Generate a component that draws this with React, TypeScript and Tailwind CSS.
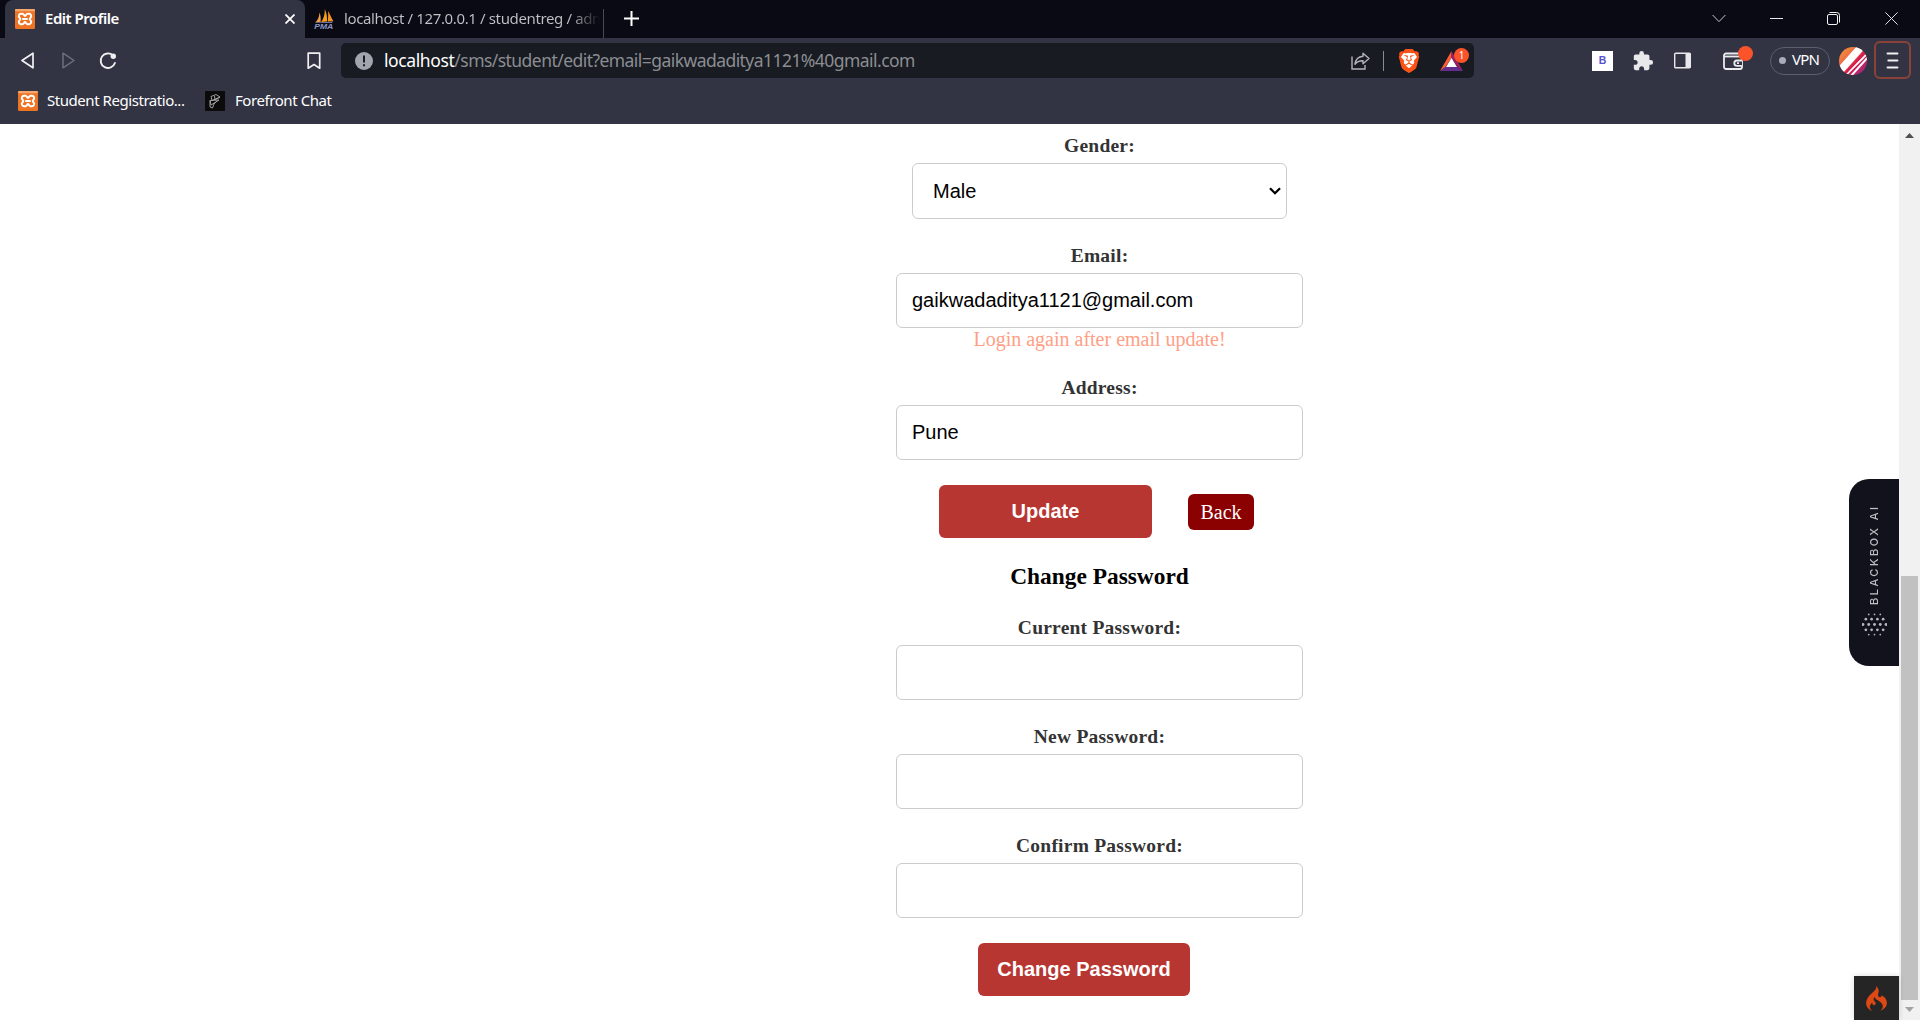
import React from "react";
import { SiBrave, SiCodeigniter } from "react-icons/si";
import { MdExtension } from "react-icons/md";

function XamppIcon() {
  return (
    <svg width="20" height="20" viewBox="0 0 20 20" className="shrink-0">
      <rect width="20" height="20" rx="1.5" fill="#ee7425" />
      <rect width="20" height="2.2" rx="1" fill="#f6a76e" />
      <path
        d="M7.400 4.800H6A2.200 2.200 0 0 0 4.600 8.700L5.300 10l-.7 1.300A2.200 2.200 0 0 0 6 15.200h1.400C9 15.200 9 13 10 13s1 2.200 2.600 2.200H14a2.200 2.200 0 0 0 1.400-3.900L14.700 10l.7-1.300A2.200 2.200 0 0 0 14 4.800h-1.400C11 4.800 11 7 10 7S9 4.800 7.400 4.800ZM8 10h4"
        fill="none"
        stroke="#fff"
        strokeWidth="2"
        strokeLinejoin="round"
        strokeLinecap="round"
      />
    </svg>
  );
}

function PmaIcon() {
  return (
    <svg width="20" height="20" viewBox="0 0 20 20" className="shrink-0 overflow-visible">
      <path d="M5.500 3.500C5.200 8 4 11 1.200 13.500L6.600 13C7 9 6.500 6 5.500 3.500Z" fill="#f0a04a" />
      <path d="M10.800 0C11 5 9.800 9.500 7.200 13l5.800-.4C13.400 8 12.500 4 10.800 0Z" fill="#f89c1c" />
      <path d="M14 2c2 3 3 6.500 5.400 10.300l-5.700.3C14.200 9 14.400 5.500 14 2Z" fill="#f6961d" />
      <path d="M1 13.500 19 12.800l-1 1.200H2Z" fill="#6b78ac" />
      <text x="0.300" y="19.500" fontSize="7.500" fontWeight="700" fontStyle="italic" fontFamily="Liberation Sans, sans-serif" textLength="19" lengthAdjust="spacingAndGlyphs" fill="#8c97c4">
        PMA
      </text>
    </svg>
  );
}

function TabStrip() {
  return (
    <div className="flex h-[38px] bg-[#0a0a14] pl-[5px]">
      <div className="flex h-[38px] w-[300px] shrink-0 items-center rounded-t-[8px] bg-[#323443] pl-[10px] pr-[10px]">
        <XamppIcon />
        <span className="ml-[10px] flex-1 pb-[2px] text-[15px] font-semibold tracking-[-0.480px] text-white">Edit Profile</span>
        <svg width="10" height="10" viewBox="0 0 10 10" stroke="#fff" strokeWidth="1.800">
          <path d="m.5.5 9 9m0-9-9 9" />
        </svg>
      </div>
      <div className="flex h-[38px] w-[299px] shrink-0 items-center pl-[9px]">
        <PmaIcon />
        <span className="mb-[2px] ml-[10px] w-[256px] overflow-hidden whitespace-nowrap bg-linear-to-r from-[#c2c2c6] from-88% to-transparent bg-clip-text text-[15px] tracking-[-0.370px] text-transparent">
          localhost / 127.0.0.1 / studentreg / adm
        </span>
        <span className="ml-auto mt-[9px] h-[29px] w-px self-start bg-[#4a4a52]" />
      </div>
      <svg width="15" height="15" viewBox="0 0 15 15" className="ml-[20px] mt-[11px]" stroke="#fff" strokeWidth="2">
        <path d="M7.500 0v15M0 7.500h15" />
      </svg>
      <div className="ml-auto flex h-[38px] items-center pb-px pr-[22px]">
        <svg width="14" height="9" viewBox="0 0 14 9" fill="none" stroke="#c8c8cc" className="mr-[44px]">
          <path d="m.6 1 6.400 6.600L13.400 1" />
        </svg>
        <span className="mr-[44px] h-px w-[13px] bg-[#e8e8e8]" />
        <svg width="13" height="13" viewBox="0 0 13 13" fill="none" stroke="#f2f2f2" className="mr-[45px]">
          <rect x=".5" y="2.500" width="10" height="10" rx="1.500" />
          <path d="M2.500.5h7.200a2.800 2.800 0 0 1 2.800 2.800v7.200" />
        </svg>
        <svg width="13" height="13" viewBox="0 0 13 13" stroke="#e2e2e4">
          <path d="m.4.4 12.200 12.200m0-12.200L.4 12.600" />
        </svg>
      </div>
    </div>
  );
}

function Toolbar() {
  return (
    <div className="flex h-[45px] items-center pr-[9px]">
      <svg width="13" height="17" viewBox="0 0 13 17" className="ml-[21px]" fill="none" stroke="#f0f0f2" strokeWidth="1.700" strokeLinejoin="round">
        <path d="M12 1.200v14.600L1 8.500Z" />
      </svg>
      <svg width="13" height="17" viewBox="0 0 13 17" className="ml-[28px]" fill="none" stroke="#6d6f7b" strokeWidth="1.500" strokeLinejoin="round">
        <path d="M1 1.200v14.600l11-7.300Z" />
      </svg>
      <svg width="18" height="18" viewBox="0 0 18 18" className="ml-[24px]" fill="none">
        <path d="M14 3.400A7.300 7.300 0 1 0 15.900 11" stroke="#f0f0f2" strokeWidth="1.900" strokeLinecap="round" />
        <circle cx="14.300" cy="4.300" r="2.700" fill="#f0f0f2" />
      </svg>
      <svg width="14" height="18" viewBox="0 0 14 18" className="ml-[190px]" fill="none" stroke="#f0f0f2" strokeWidth="1.700" strokeLinejoin="round">
        <path d="M1.200 1.200h11.500v15L7 12.500l-5.800 3.700Z" />
      </svg>
      <div className="ml-[20px] flex h-[35px] w-[1133px] items-center rounded-[5px] bg-[#181b21]">
        <svg width="18" height="18" viewBox="0 0 18 18" className="ml-[14px]">
          <circle cx="9" cy="9" r="9" fill="#a2a5ae" />
          <path d="M8 3.500h2v7H8zM8 12.200h2v2H8z" fill="#181b21" />
        </svg>
        <div className="ml-[11px] whitespace-nowrap text-[17.500px] tracking-[-0.550px] text-[#8b8d92]">
          <span className="tracking-[-0.400px] text-white">localhost</span>/sms/student/edit?email=gaikwadaditya1121%40gmail.com
        </div>
        <svg width="19" height="18" viewBox="0 0 19 18" className="ml-auto" fill="none" stroke="#b4b5ba" strokeWidth="1.400">
          <path d="M1 4.500V17h13v-4" />
          <path d="M12 1.200 18 6.500l-6 5.300V8.700c-3.500-.2-5.800.7-8 3.500.6-4.700 3.400-7.500 8-7.900Z" strokeLinejoin="round" />
        </svg>
        <span className="ml-[13px] h-[20px] w-px bg-[#8a8c92]" />
        <div className="relative ml-[13px] flex h-[24px] w-[24px] items-center justify-center">
          <svg width="24" height="24" viewBox="0 0 24 24">
            <path d="M6 3.500h12l2.500 4-2 8.500-6.500 5-6.500-5-2-8.500Z" fill="#fff" />
          </svg>
          <SiBrave size={24} color="#fb5215" className="absolute inset-0" />
        </div>
        <div className="relative ml-[19px] mr-[5px] h-[26px] w-[29px]">
          <svg width="23" height="21" viewBox="0 0 23 21" className="mt-[3px]">
            <path d="M11.500 0 0 20l5.500-4 6-9Z" fill="#ff5b3a" />
            <path d="m11.500 0 11.500 20-5.500-4-6-9Z" fill="#9e1f63" />
            <path d="M0 20h23l-5.500-4h-12Z" fill="#662d91" />
            <path d="m11.500 7 5.500 9H6Z" fill="#fff" />
          </svg>
          <span className="absolute right-0 top-0 flex h-[15px] w-[15px] items-center justify-center rounded-full bg-[#fb542b] text-[10px] leading-none text-white">1</span>
        </div>
      </div>

      <span className="ml-auto flex h-[20px] w-[21px] items-center justify-center bg-white font-['Liberation_Sans',sans-serif] text-[10.500px] font-semibold leading-none text-[#5550cc]">B</span>
      <MdExtension size={22} color="#e9e9eb" className="ml-[19px]" />
      <svg width="17" height="17" viewBox="0 0 17 17" className="ml-[20px]">
        <rect x=".7" y="1.200" width="15.600" height="14.600" rx="1" fill="none" stroke="#e9e9eb" strokeWidth="1.400" />
        <path d="M11.500 1h5v15h-5z" fill="#e9e9eb" />
      </svg>
      <div className="relative ml-[32px] h-[18px] w-[20px]">
        <svg width="20" height="18" viewBox="0 0 20 18" fill="none" stroke="#ececef" strokeWidth="1.800">
          <rect x="1" y="1.500" width="18" height="15.500" rx="2" />
          <path d="M1 4.500h17" />
          <path d="M19 8.500h-5a2.700 2.700 0 0 0 0 5.400h5M14 11.200h2" fill="#323443" />
        </svg>
        <span className="absolute left-[15px] top-[-6px] h-[15px] w-[15px] rounded-full bg-[#fb542b]" />
      </div>
      <div className="ml-[27px] flex h-[28px] w-[60px] items-center rounded-full border border-[#5b5e70] pl-[8px]">
        <span className="h-[7px] w-[7px] rounded-full bg-[#a9abbd]" />
        <span className="ml-[6px] pb-[2px] text-[15px] leading-none tracking-[-0.800px] text-white">VPN</span>
      </div>
      <svg width="28" height="28" viewBox="0 0 28 28" className="ml-[9px]">
        <defs>
          <linearGradient id="avatar" x1="0" y1="0" x2="1" y2="1">
            <stop offset="0" stopColor="#f7a035" />
            <stop offset=".35" stopColor="#ed6a45" />
            <stop offset=".6" stopColor="#d71f4b" />
            <stop offset="1" stopColor="#8a2b94" />
          </linearGradient>
          <clipPath id="avatarClip">
            <circle cx="14" cy="14" r="14" />
          </clipPath>
        </defs>
        <g clipPath="url(#avatarClip)">
          <path d="M0 0h28v28H0z" fill="url(#avatar)" />
          <g stroke="#fff">
            <path d="M-1 26 24-2" strokeWidth="7.500" />
            <path d="M7 28 28 7" strokeWidth="1.800" />
            <path d="M11 30 30 9" strokeWidth="2" />
          </g>
          <path d="M3 30 28 3" stroke="#d71f4b" strokeWidth="2" />
        </g>
      </svg>
      <div className="ml-[7px] mt-[-1px] flex h-[38px] w-[37px] items-center justify-center rounded-[6px] border-2 border-[#8a4239]">
        <svg width="13" height="17" viewBox="0 0 13 17" stroke="#f0f0f2" strokeWidth="1.900" strokeLinecap="round">
          <path d="M1.500 1.500h10M2.300 8.500h9.200M1.500 15.500h10" />
        </svg>
      </div>
    </div>
  );
}

function BookmarkBar() {
  return (
    <div className="flex h-[36px] items-center pl-[18px] text-[15px] text-white">
      <XamppIcon />
      <span className="ml-[9px] w-[158px] whitespace-nowrap pb-[2px] tracking-[-0.450px]">Student Registratio...</span>
      <svg width="20" height="20" viewBox="0 0 20 20" fill="none" stroke="#aaa" strokeWidth=".9">
        <rect width="20" height="20" fill="#0b0b0c" stroke="none" />
        <path d="M6 5.500 11 3.500l4 2.500-8 3.500-1-4ZM9.500 5l.5 4 5-3M5 9.500l9-.5-8 5-1-4.500ZM5 9.500v6.500l2.500 1L9 13l3-3" />
      </svg>
      <span className="ml-[10px] whitespace-nowrap pb-[2px] tracking-[-0.430px]">Forefront Chat</span>
    </div>
  );
}

const labelText = "block h-[23px] text-center text-[19.500px] font-bold leading-[23px] tracking-[0.230px] text-[#333]";

function Field({ label, value = "" }: { label: string; value?: string }) {
  return (
    <label className="block w-full">
      <span className={labelText}>{label}</span>
      <input
        readOnly
        value={value}
        className="mt-[6px] block h-[55px] w-full rounded-[6px] border border-[#ccc] bg-white px-[15px] font-['Liberation_Sans',sans-serif] text-[20px] text-black"
      />
    </label>
  );
}

function ProfileForm() {
  return (
    <section className="ml-[896px] flex w-[407px] flex-col items-center pt-[10px] font-['Liberation_Serif',serif]">
      <span className={labelText}>Gender:</span>
      <div className="mt-[6px] flex h-[56px] w-[375px] items-center justify-between rounded-[6px] border border-[#ccc] pl-[20px] pr-[5px] font-['Liberation_Sans',sans-serif] text-[20px] text-black">
        Male
        <svg width="12" height="8" viewBox="0 0 12 8" fill="none" stroke="#000" strokeWidth="2.300">
          <path d="m1 1.200 5 5 5-5" />
        </svg>
      </div>
      <div className="mt-[25px] w-full">
        <Field label="Email:" value="gaikwadaditya1121@gmail.com" />
      </div>
      <span className="h-[23px] text-[20px] leading-[23px] text-[#ffa085]">Login again after email update!</span>
      <div className="mt-[25px] w-full">
        <Field label="Address:" value="Pune" />
      </div>
      <div className="mt-[25px] flex w-full items-center pl-[43px]">
        <button className="h-[53px] w-[213px] rounded-[6px] bg-[#b83632] pb-[2px] font-['Liberation_Sans',sans-serif] text-[20px] font-bold text-white">Update</button>
        <button className="ml-[36px] mt-px h-[36px] w-[66px] rounded-[6px] bg-[#8b0000] text-[20px] leading-[35px] text-white">Back</button>
      </div>
      <h3 className="mt-[25px] h-[27px] text-[23.400px] font-bold leading-[27px] text-black">Change Password</h3>
      <div className="mt-[26px] w-full">
        <Field label="Current Password:" />
      </div>
      <div className="mt-[25px] w-full">
        <Field label="New Password:" />
      </div>
      <div className="mt-[25px] w-full">
        <Field label="Confirm Password:" />
      </div>
      <button className="mr-[31px] mt-[25px] h-[53px] w-[212px] rounded-[6px] bg-[#b83632] pb-[2px] font-['Liberation_Sans',sans-serif] text-[20px] font-bold text-white">
        Change Password
      </button>
    </section>
  );
}

const dotRows = [
  { y: 3, xs: [7, 13, 19], r: 0.9 },
  { y: 8, xs: [4, 10, 16, 22], r: 1.4 },
  { y: 13.5, xs: [1, 7, 13, 19, 25], r: 1.5 },
  { y: 19, xs: [4, 10, 16, 22], r: 1.4 },
  { y: 24, xs: [7, 13, 19], r: 0.9 },
];

function BlackboxTab() {
  return (
    <div className="absolute right-[21px] top-[479px] flex h-[187px] w-[50px] flex-col items-center rounded-l-[20px] bg-[#11121b] pt-[28px]">
      <span className="h-[98px] rotate-180 whitespace-nowrap text-[11px] font-medium leading-[14px] tracking-[2.500px] text-[#c0c0c4] [writing-mode:vertical-rl] font-['Inter',sans-serif]">
        BLACKBOX AI
      </span>
      <svg width="25" height="27" viewBox="0 0 26 27" className="mt-[6px]" fill="#b8b8bc">
        {dotRows.map((row) => row.xs.map((x) => <circle key={`${x}-${row.y}`} cx={x} cy={row.y} r={row.r} />))}
      </svg>
    </div>
  );
}

function Scrollbar() {
  return (
    <div className="flex w-[21px] flex-col items-center bg-[#f1f1f1] pb-[8px] pt-[9px]">
      <svg width="9" height="5" viewBox="0 0 9 5" fill="#505050">
        <path d="M0 5 4.500 0 9 5Z" />
      </svg>
      <span className="mt-[438px] h-[424px] w-[17px] bg-[#c1c1c1]" />
      <svg width="9" height="5" viewBox="0 0 9 5" className="mt-[7px]" fill="#a3a3a3">
        <path d="m0 0 4.500 5L9 0Z" />
      </svg>
    </div>
  );
}

export default function App() {
  return (
    <div className="relative flex h-[1020px] w-[1920px] flex-col overflow-hidden bg-white font-['Noto_Sans',sans-serif]">
      <header className="h-[124px] shrink-0 bg-[#323443]">
        <TabStrip />
        <Toolbar />
        <BookmarkBar />
      </header>
      <div className="flex h-[896px]">
        <main className="flex-1">
          <ProfileForm />
        </main>
        <Scrollbar />
      </div>
      <BlackboxTab />
      <div className="absolute bottom-0 right-[21px] flex h-[44px] w-[45px] items-center justify-center bg-[#252525] shadow-[0_0_6px_rgba(0,0,0,0.15)]">
        <SiCodeigniter size={25} color="#dd4814" />
      </div>
    </div>
  );
}
